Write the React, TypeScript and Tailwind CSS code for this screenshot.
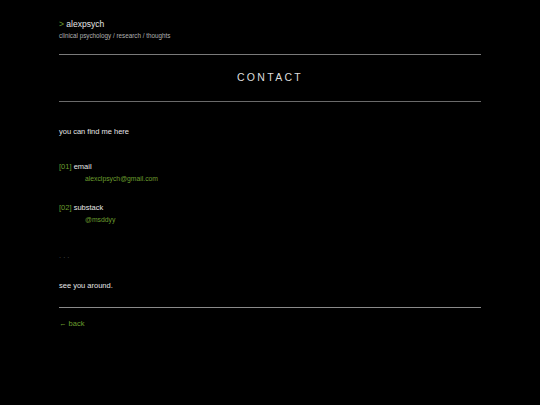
export default function App() {
    const links = [
        { num: '01', label: 'email', value: 'alexclpsych@gmail.com' },
        { num: '02', label: 'substack', value: '@msddyy' },
    ];

    return (
        <div className="min-h-[405px] bg-black font-['Liberation_Sans',Arial,sans-serif] text-[#e6e6e6]">
            <div className="mx-auto w-[422px] pt-[18px]">
                <header>
                    <p className="text-[8.5px] leading-[12px]">
                        <span className="text-[#6b9e2e]">&gt;</span> alexpsych
                    </p>
                    <p className="mt-[1px] text-[6.3px] leading-[10px] text-[#b0b0b0]">
                        clinical psychology / research / thoughts
                    </p>
                </header>

                <div className="mt-[13px] border-t border-[#7a7a7a] pt-[15px] pb-[17px] text-center">
                    <h1 className="text-[10.5px] leading-[14px] tracking-[0.22em] text-[#dcdcdc]">CONTACT</h1>
                </div>
                <div className="border-t border-[#6a6a6a]" />

                <p className="mt-[24px] text-[7.5px] leading-[11px]">you can find me here</p>

                <div className="mt-[24px] flex flex-col gap-[18px]">
                    {links.map(link => (
                        <div key={link.num}>
                            <p className="text-[7.5px] leading-[11px]">
                                <span className="text-[#6b9e2e]">[{link.num}]</span> {link.label}
                            </p>
                            <p className="mt-[1px] pl-[26px] text-[6.8px] leading-[11px] text-[#6b9e2e]">
                                {link.value}
                            </p>
                        </div>
                    ))}
                </div>

                <p className="mt-[25px] text-[7.5px] leading-[11px] text-[#555]">. . .</p>

                <p className="mt-[19px] text-[7.5px] leading-[11px]">see you around.</p>

                <div className="mt-[16px] border-t border-[#8a8a8a]" />

                <a href="#" className="mt-[10px] block text-[7.5px] leading-[11px] text-[#6b9e2e]">
                    ← back
                </a>
            </div>
        </div>
    );
}
